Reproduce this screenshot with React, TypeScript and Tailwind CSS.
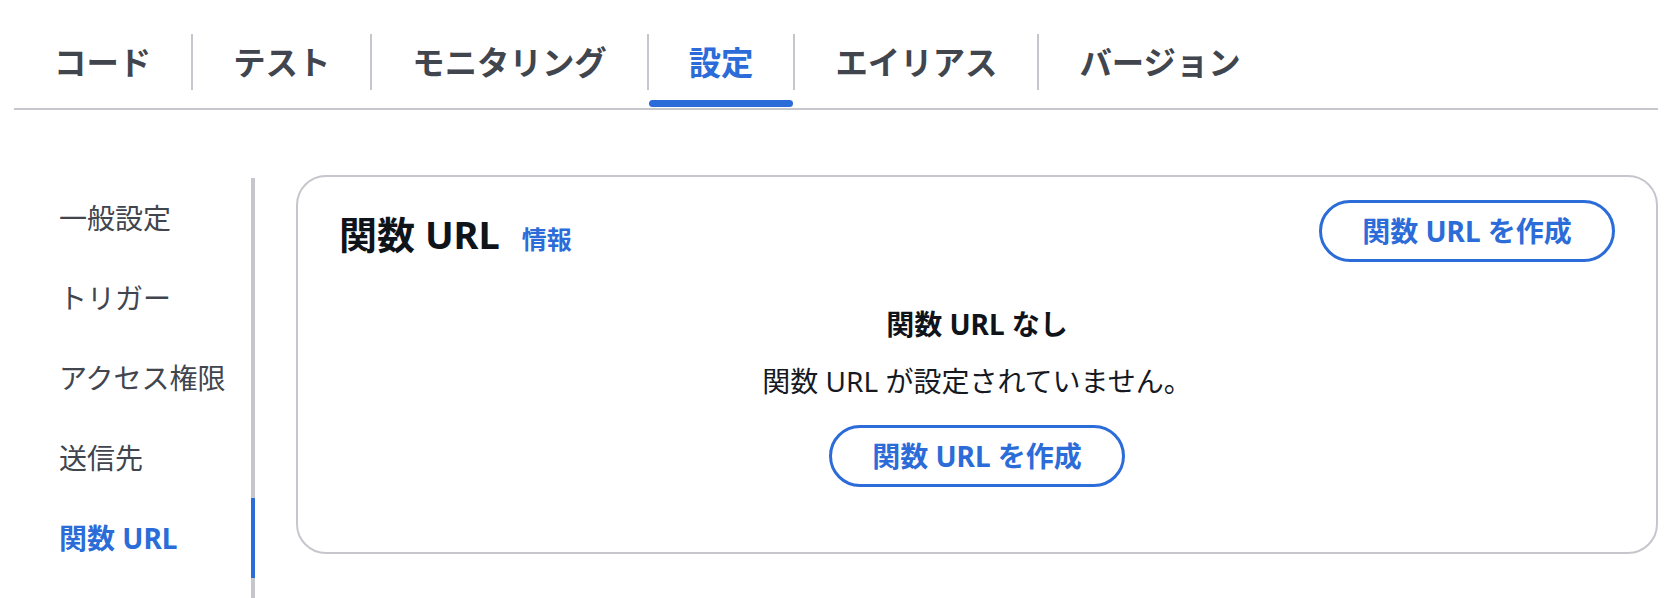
const tabs = ['コード', 'テスト', 'モニタリング', '設定', 'エイリアス', 'バージョン'];
const navItems = ['一般設定', 'トリガー', 'アクセス権限', '送信先', '関数 URL'];

function CreateButton() {
  return (
    <button className="w-[296px] h-[62px] rounded-full border-[3px] border-[#2b6cd8] bg-white text-[#2b6cd8] text-[28px] font-bold flex items-center justify-center leading-none">
      関数 URL を作成
    </button>
  );
}

export default function App() {
  return (
    <div className="h-[598px] overflow-hidden bg-white font-['Noto_Sans','Noto_Sans_CJK_JP',sans-serif]">
      {/* Tabs */}
      <div className="ml-[14px] mr-[22px] pt-[34px] border-b-2 border-[#c6c6cd]">
        <div className="flex mb-[1px]">
          {tabs.map((t, i) => {
            const active = t === '設定';
            return (
              <div key={t} className="flex flex-col">
                <div
                  className={
                    'h-[56px] flex items-center px-[40px] text-[32.4px] font-bold ' +
                    (i > 0 ? 'border-l-2 border-[#c6c6cd] ' : '') +
                    (active ? 'text-[#2b6cd8]' : 'text-[#41454e]')
                  }
                >
                  {t}
                </div>
                <div
                  className={
                    'mt-[10px] h-[7px] rounded-full ml-[2px] ' + (active ? 'bg-[#2b6cd8]' : 'bg-transparent')
                  }
                />
              </div>
            );
          })}
        </div>
      </div>

      {/* Body */}
      <div className="flex ml-[14px] mr-[22px] pt-[65px] items-start">
        <nav className="w-[241px] shrink-0 mt-[3px] flex flex-col">
          {navItems.map((n) => {
            const active = n === '関数 URL';
            return (
              <div
                key={n}
                className={
                  'h-[80px] flex items-center pl-[45px] border-r-4 text-[28px] ' +
                  (active ? 'border-[#2b6cd8] text-[#2b6cd8] font-bold' : 'border-[#c6c6cd] text-[#41454e]')
                }
              >
                {n}
              </div>
            );
          })}
          <div className="h-[40px] border-r-4 border-[#c6c6cd]" />
        </nav>

        <section className="ml-[41px] flex-1 border-2 border-[#c6c6cd] rounded-[30px] px-[41px] pt-[23px] pb-[65px]">
          <div className="flex items-center justify-between">
            <div className="flex items-baseline gap-[22px] pt-[6px]">
              <h2 className="text-[38px] font-bold text-[#0f141a] leading-none">関数 URL</h2>
              <a className="text-[25px] font-bold text-[#2b6cd8] leading-none">情報</a>
            </div>
            <CreateButton />
          </div>

          <div className="flex flex-col items-center">
            <h3 className="mt-[42px] text-[28px] font-bold text-[#0f141a] leading-[40px]">関数 URL なし</h3>
            <p className="mt-[17px] text-[28px] text-[#16191f] leading-[40px]">関数 URL が設定されていません。</p>
            <div className="mt-[24px]">
              <CreateButton />
            </div>
          </div>
        </section>
      </div>
    </div>
  );
}
